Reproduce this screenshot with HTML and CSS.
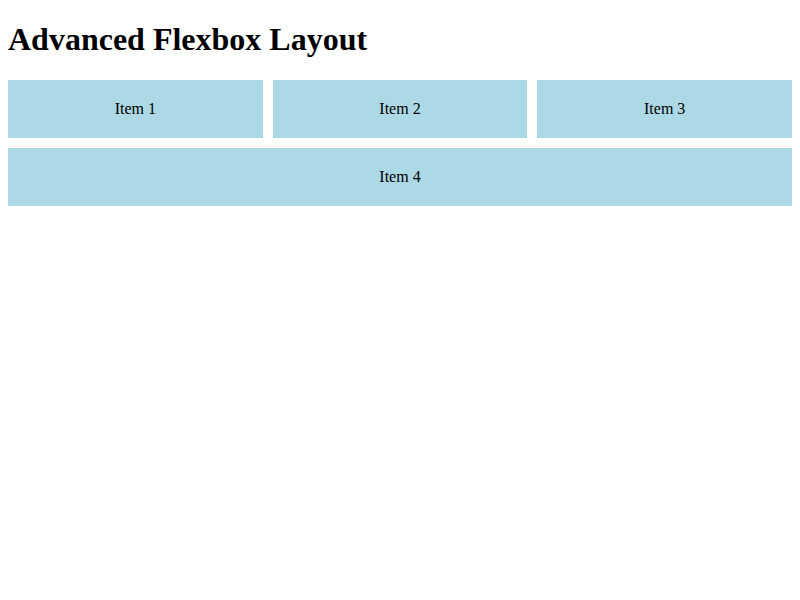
FILE: index.html
```html
<!DOCTYPE html>
<html>
<head>
<meta charset="utf-8">
<link rel="stylesheet" href="styles.css">
</head>
<body>
<h1 class="title">Advanced Flexbox Layout</h1>
<div class="container">
  <div class="item">Item 1</div>
  <div class="item">Item 2</div>
  <div class="item">Item 3</div>
  <div class="item">Item 4</div>
</div>
</body>
</html>
```
FILE: styles.css
```css
body {
  margin: 0 8px 8px;
  font-family: "Liberation Serif", "Times New Roman", serif;
  font-size: 16px;
  color: #000;
  background: #fff;
}
.title {
  font-size: 32px;
  font-weight: bold;
  margin: 21.44px 0;
}
.container {
  display: flex;
  flex-wrap: wrap;
  gap: 10px;
}
.item {
  box-sizing: border-box;
  flex: 1 1 30%;
  background: #add8e6;
  padding: 20px;
  text-align: center;
}
```
